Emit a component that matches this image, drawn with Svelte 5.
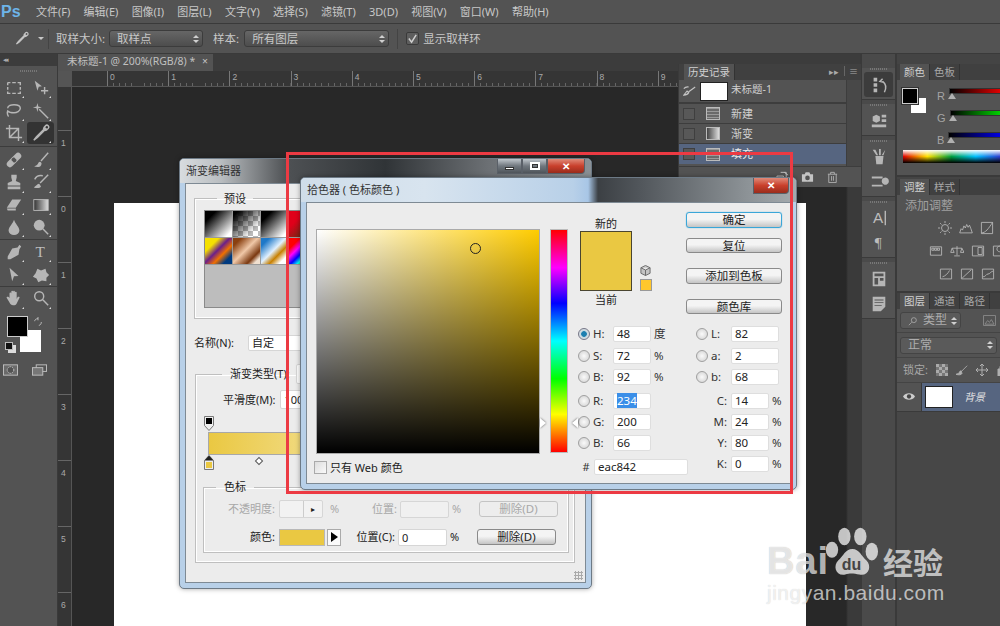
<script>
  const menus = ["文件(F)", "编辑(E)", "图像(I)", "图层(L)", "文字(Y)", "选择(S)", "滤镜(T)", "3D(D)", "视图(V)", "窗口(W)", "帮助(H)"];

  const mag = { s: "M8 8m-5 0a5 5 0 1 0 10 0a5 5 0 1 0-10 0M12 12l6 6" };
  const toolGroups = [
    [
      { s: "M3 4h3M8 4h4M14 4h3v3M17 9v3M17 14v2h-3M12 16H8M6 16H3v-2M3 12V9M3 7V4" },
      { f: "M3 2l8 6-3.5.5L6 13z", s: "M14 9v8M10 13h8" },
      { s: "M3 7c0-3 4-4 7-4s7 1 7 4-4 5-7 5-6-1-7-2c-1 2 0 5 1 6" },
      { f: "M6 1l1 4 4 1-4 1-1 4-1-4-4-1 4-1z", s: "M8 8l10 10" },
      { s: "M5 1v14h14M1 5h14v14M5 15L15 5" },
      { s: "M13 3l4 4M15 2a2 2 0 0 1 3 3l-3 2-2-2zM13 6l-8 8-3 4 4-3 8-8", on: true },
    ],
    [
      { f: "M3 12L12 3a3 3 0 0 1 5 5l-9 9a3 3 0 0 1-5-5zM8 8l-1 2 3 3 2-1 1-2-3-3z" },
      { f: "M9 12c-2 0-2 2-3 3s-3 2-4 2c3 1 7 1 8-1s1-3-1-4z", s: "M18 2L10 11" },
      { f: "M7 2h6v3l-1 4 5 2v3H3v-3l5-2-1-4zM3 15h14v3H3z" },
      { f: "M8 12c-2 0-3 2-6 4 3 1 7 1 8-1z", s: "M18 2L9 11M3 7a8 7 0 0 1 9-4" },
      { f: "M8 4h10l-6 9H2zM2 14h10v2H3z" },
      { grad: true },
      { f: "M10 2c1 4 6 8 6 12a6 5 0 0 1-12 0c0-4 5-8 6-12z" },
      { f: "M8 2a6 6 0 1 1 0 12a6 6 0 0 1 0-12z", s: "M12 12l6 6" },
    ],
    [
      { f: "M16 2l2 2-2 3-1 6-9 5-3 0 0-3 5-9 6-1z" },
      { t: "T" },
      { f: "M5 2l10 9-5 .5L8 17z" },
      { f: "M6 3l4 2 5-2 1 4 3 3-3 3v4l-5-1-4 2-2-4-4-2 3-4z" },
    ],
    [
      { f: "M5 10V5a1 1 0 0 1 2 0v3V3a1 1 0 0 1 2 0v5V3a1 1 0 0 1 2 0v5V4a1 1 0 0 1 2 0v7l1-2c1-1 3 0 2 1l-3 6c-1 2-2 2-3 2H9c-2 0-3-1-4-3L2 10c-1-1 1-2 2-1z" },
      mag,
    ],
  ];

  const stripGroups = [
    [{ f: "M4 2h4v4H4zM4 8h4v4H4zM4 14h4v4H4z", s: "M16 18c2-4 2-9-2-12M14 3l-3 3 4 1", on: true }],
    [{ f: "M3 5l4-2 4 2v5l-4 2-4-2zM13 3h5v3h-5zM13 8h5v3h-5zM2 14h16v3H2z" }],
    [
      { f: "M6 9h9l-1 9H7zM3 2l4 6h2L6 2zM10 1v7h2V1zM17 2l-4 6h2z" },
      { f: "M13 9a4 4 0 1 1 0 .1zM2 4h12v2H2zM2 13h12v2H2z" },
    ],
    [{ t: "A", bar: true }, { t: "¶" }],
    [
      { f: "M3 2h14v16H3zM5 4v3h10V4zM5 9v7h4V9zM11 9v3h4V9z" },
      { f: "M3 2h14v11l-5 5H3zM5 5v1h10V5zM5 8v1h10V8zM5 11v1h8v-1z" },
    ],
  ];

  const rulerX = [0, 1, 2, 3, 4, 5, 6, 7, 8, 9];
  const rulerY = ["", "1", "0", "1", "2", "3", "4", "5", "6"];

  const presets = ["bw", "tr", "bw", "rg", "vo", "cu", "bl", "rb"];

  const hsb = [
    { k: "H:", v: "48", u: "度", on: true },
    { k: "S:", v: "72", u: "%" },
    { k: "B:", v: "92", u: "%" },
  ];
  const rgb = [
    { k: "R:", v: "234", sel: true },
    { k: "G:", v: "200" },
    { k: "B:", v: "66" },
  ];
  const lab = [
    { k: "L:", v: "82" },
    { k: "a:", v: "2" },
    { k: "b:", v: "68" },
  ];
  const cmyk = [
    { k: "C:", v: "14" },
    { k: "M:", v: "24" },
    { k: "Y:", v: "80" },
    { k: "K:", v: "0" },
  ];

  const historyRows = [
    { name: "新建", kind: "doc" },
    { name: "渐变", kind: "grad" },
    { name: "填充", kind: "doc", on: true },
  ];

  const adjust = [
    ["M10 5a5 5 0 1 1 0 10a5 5 0 0 1 0-10zM10 0v3M10 17v3M0 10h3M17 10h3M3 3l2 2M15 15l2 2M3 17l2-2M15 5l2-2", "M1 17l2-6 2 2 2-6 2 3 2-5 2 4 2-3 2 5 2 6z", "M2 2h16v16H2zM2 17c6 0 10-6 16-15"],
    ["M2 4h16v12H2zM4 6v3h3V6zM8 6v3h3V6zM12 6v3h3V6z", "M10 3v13M3 6h14M3 6l-2 6h5zM17 6l-2 6h5zM6 17h8", "M2 3h16v14H2zM10 5v10h6V5z", "M2 3h16v14H2zM7 7a4 4 0 1 1 0 .1"],
    ["M2 3h16v14H2zM5 14c4-1 8-5 10-9", "M2 3h16v14H2zM3 16L16 4", "M2 3h16v14H2zM3 14c4 0 4-4 7-4s3-3 7-4"],
  ];
</script>

{#snippet icon(ic)}
  <svg class="ico" viewBox="0 0 20 20" aria-hidden="true">
    {#if ic.grad}
      <defs>
        <linearGradient id="toolgrad"><stop offset="0" stop-color="#333" /><stop offset="1" stop-color="#ddd" /></linearGradient>
      </defs>
      <rect x="2" y="4" width="16" height="12" fill="url(#toolgrad)" stroke="#bbb" />
    {/if}
    {#if ic.t}
      <text x="9" y="15" text-anchor="middle" class="ico-t" class:sans={ic.bar}>{ic.t}</text>
      {#if ic.bar}<path class="ln" d="M17 2v16" />{/if}
    {/if}
    {#if ic.f}<path class="fl" d={ic.f} fill-rule="evenodd" />{/if}
    {#if ic.s}<path class="ln" d={ic.s} />{/if}
  </svg>
{/snippet}

{#snippet valueRow(r, unit, wide, radio)}
  <div class="vrow" class:wide>
    {#if radio}<span class="radio" class:on={r.on}></span>{:else}<span></span>{/if}
    <span class="vkey" class:right={!radio}>{r.k}</span>
    <span class="vinput"><span class:sel={r.sel}>{r.v}</span></span>
    <span class="vunit">{unit ?? r.u ?? ""}</span>
  </div>
{/snippet}

<div class="ps">
  <header class="menubar">
    <span class="logo">Ps</span>
    <nav class="menus">
      {#each menus as m}<span>{m}</span>{/each}
    </nav>
  </header>

  <div class="options">
    <svg class="opt-dropper" viewBox="0 0 20 20"><path d="M13 3l4 4M15 2a2 2 0 0 1 3 3l-3 2-2-2zM13 6l-8 8-3 4 4-3 8-8" fill="none" stroke="#c4c4c4" stroke-width="1.8" /></svg>
    <span class="caret"></span>
    <span class="opt-sep"></span>
    <span class="opt-label">取样大小:</span>
    <span class="select w1">取样点<i class="updown"></i></span>
    <span class="opt-label l2">样本:</span>
    <span class="select w2">所有图层<i class="updown"></i></span>
    <span class="opt-sep s2"></span>
    <span class="opt-check">
      <svg viewBox="0 0 12 12"><path d="M2 6l3 4 5-8" fill="none" stroke="#d0d0d0" stroke-width="1.6" /></svg>
    </span>
    <span class="opt-label">显示取样环</span>
  </div>

  <div class="main">
    <aside class="toolbar">
      <div class="collapse">◂◂</div>
      <div class="grip"></div>
      {#each toolGroups as group, i}
        {#if i > 0}<div class="tool-div d{i}"></div>{/if}
        <div class="tool-grid">
          {#each group as t}
            <div class="tool" class:on={t.on}>{@render icon(t)}</div>
          {/each}
        </div>
      {/each}
      <div class="colors">
        <span class="bg-sw"></span>
        <span class="fg-sw"></span>
        <span class="def-sw"></span>
        <svg class="swap" viewBox="0 0 12 12"><path d="M2 5c0-2 2-3 4-3M7 10c2 0 3-2 3-4M6 0v4M2 8" fill="none" stroke="#c8c8c8" /></svg>
      </div>
      <div class="tool-modes">
        <svg viewBox="0 0 16 12"><rect x=".5" y=".5" width="15" height="11" fill="#6a6a6a" stroke="#c0c0c0" /><circle cx="8" cy="6" r="3.5" fill="#535353" stroke="#ccc" stroke-dasharray="1.5 1" /></svg>
        <svg viewBox="0 0 16 12"><rect x="4.5" y=".5" width="11" height="7" fill="none" stroke="#c0c0c0" /><rect x=".5" y="3.5" width="11" height="8" fill="#777" stroke="#c0c0c0" /></svg>
      </div>
    </aside>

    <section class="docarea">
      <div class="tabbar">
        <div class="tab">未标题-1 @ 200%(RGB/8) * <span class="tab-x">×</span></div>
      </div>
      <div class="ruler-top">
        <div class="corner"></div>
        <div class="rx-offset"></div>
        {#each rulerX as n}<div class="rx">{n}</div>{/each}
      </div>
      <div class="canvas-row">
        <div class="ruler-left">
          {#each rulerY as n}<div class="ry">{n}</div>{/each}
        </div>
        <div class="canvas"><div class="paper"></div></div>
      </div>
    </section>

    <aside class="strip">
      {#each stripGroups as group}
        <div class="strip-group">
          <div class="grip"></div>
          {#each group as ic}
            <div class="strip-btn" class:on={ic.on}>{@render icon(ic)}</div>
          {/each}
        </div>
      {/each}
    </aside>

    <aside class="dock">
      <div class="panel color-panel">
        <div class="ptabs"><span class="ptab on">颜色</span><span class="ptab">色板</span></div>
        <div class="color-body">
          <div class="mini-sw"><span class="mini-bg"></span><span class="mini-fg"></span></div>
          <div class="sliders">
            <div class="slider"><span>R</span><i class="track r"></i></div>
            <div class="slider"><span>G</span><i class="track g"></i></div>
            <div class="slider"><span>B</span><i class="track b"></i></div>
          </div>
        </div>
        <div class="spectrum"></div>
      </div>
      <div class="panel adj-panel">
        <div class="ptabs"><span class="ptab on">调整</span><span class="ptab">样式</span></div>
        <div class="adj-title">添加调整</div>
        {#each adjust as row, i}
          <div class="adj-row" class:r1={i === 0} class:r2={i === 1} class:r3={i === 2}>
            {#each row as d}
              <svg viewBox="0 0 20 20"><path class="ln thin" d={d} /></svg>
            {/each}
          </div>
        {/each}
      </div>
      <div class="panel layer-panel">
        <div class="ptabs"><span class="ptab on">图层</span><span class="ptab">通道</span><span class="ptab">路径</span></div>
        <div class="lfilter">
          <span class="lselect s1"><svg viewBox="0 0 12 12"><path d="M7 5m-3 0a3 3 0 1 0 6 0a3 3 0 1 0-6 0M4.500 7.500L1 11" fill="none" stroke="#a8a8a8" /></svg>类型<i class="updown"></i></span>
          <svg class="limg" viewBox="0 0 14 12"><path d="M.5.5h13v11H.5zM2 10l3-4 2 2 2-3 3 5z" fill="none" stroke="#8a8a8a" /></svg>
        </div>
        <div class="lblend"><span class="lselect s2">正常<i class="updown"></i></span></div>
        <div class="llock">
          <span>锁定:</span>
          <svg viewBox="0 0 12 12"><path d="M0 0h12v12H0z" fill="#777" /><path d="M0 0h3v3H0zM6 0h3v3H6zM3 3h3v3H3zM9 3h3v3H9zM0 6h3v3H0zM6 6h3v3H6zM3 9h3v3H3zM9 9h3v3H9z" fill="#aaa" /></svg>
          <svg viewBox="0 0 14 12"><path d="M13 1L6 8M6 7c-2 0-2 2-3 3l-3 1c3 1 6 1 7-1z" fill="#b0b0b0" stroke="#b0b0b0" /></svg>
          <svg viewBox="0 0 12 12"><path d="M6 0v12M0 6h12M4 2l2-2 2 2M4 10l2 2 2-2M2 4L0 6l2 2M10 4l2 2-2 2" fill="none" stroke="#b0b0b0" /></svg>
          <svg viewBox="0 0 10 12"><path d="M3 5V3a2 2 0 0 1 4 0v2M1 5h8v7H1z" fill="#b0b0b0" stroke="#b0b0b0" /></svg>
        </div>
        <div class="lrow">
          <svg class="eye" viewBox="0 0 14 10"><path d="M0 5c3-5 11-5 14 0-3 5-11 5-14 0z" fill="#ccc" /><circle cx="7" cy="5" r="2.500" fill="#444" /></svg>
          <div class="lrow-main">
            <span class="lthumb"></span>
            <em>背景</em>
          </div>
        </div>
      </div>
    </aside>
  </div>

  <!-- floating history panel -->
  <div class="history">
    <div class="htop">
      <span class="ptab on">历史记录</span>
      <span class="hmenu">▸▸ <i></i> ≡</span>
    </div>
    <div class="hbody">
      <div class="hlist">
        <div class="hsnap">
          <svg viewBox="0 0 16 12"><path d="M15 1L7 7M1 11c3 0 5-1 6-3L5 6zM1 3a6 5 0 0 1 6-2" fill="none" stroke="#c4c4c4" stroke-width="1.400" /></svg>
          <span class="hthumb"></span>
          <span class="htxt">未标题-1</span>
        </div>
        {#each historyRows as r}
          <div class="hrow" class:on={r.on}>
            <span class="hbox"></span>
            <span class="hicon" class:grad={r.kind === "grad"}></span>
            <span>{r.name}</span>
          </div>
        {/each}
      </div>
      <div class="hscroll"></div>
    </div>
    <div class="hfoot">
      <svg viewBox="0 0 14 12"><path d="M1 5h7v6H1zM5 1h6v7M9 1l4 3" fill="none" stroke="#c4c4c4" /></svg>
      <svg viewBox="0 0 14 12"><path d="M1 3h3l1-2h4l1 2h3v8H1z" fill="#c4c4c4" /><circle cx="7" cy="7" r="2.500" fill="#535353" /></svg>
      <svg viewBox="0 0 14 12"><path d="M2 3h10M5 3V1h4v2M3 3v9h8V3M6 5v5M8 5v5" fill="none" stroke="#b0b0b0" /></svg>
    </div>
  </div>

  <!-- gradient editor dialog -->
  <div class="win ge">
    <div class="title ge-title">
      <span>渐变编辑器</span>
      <div class="winbtns">
        <span class="wb"><i class="w-min"></i></span>
        <span class="wb"><i class="w-max"></i></span>
        <span class="wb close">✕</span>
      </div>
    </div>
    <div class="ge-body">
      <fieldset class="presets">
        <legend>预设</legend>
        <div class="preset-box">
          <div class="preset-grid">
            {#each presets as p}<span class="pre {p}"></span>{/each}
          </div>
        </div>
      </fieldset>
      <div class="name-row">
        <span>名称(N):</span>
        <span class="input name-in">自定</span>
      </div>
      <fieldset class="gtype">
        <legend>渐变类型(T): <span class="input gt-in">实底</span></legend>
        <div class="smooth">
          <span>平滑度(M):</span>
          <span class="input sm-in">100</span>
        </div>
        <div class="bar-wrap">
          <svg class="stop top" viewBox="0 0 10 15"><path d="M.5.5h9v9L5 14.500.5 9.500z" fill="#eee" stroke="#777" /><rect x="2" y="2" width="6" height="6" /></svg>
          <div class="gbar"></div>
          <svg class="stop bot" viewBox="0 0 10 15"><path d="M5 .5l4.500 5v9h-9v-9z" fill="#eee" stroke="#777" /><path d="M5 .5l4.500 5h-9z" fill="#222" /><rect x="2" y="7" width="6" height="6" fill="#eac842" /></svg>
          <span class="mid"></span>
        </div>
        <fieldset class="stops">
          <legend>色标</legend>
          <div class="srow dis">
            <span class="s-a">不透明度:</span>
            <span class="input o-in"><i class="o-arrow">▸</i></span>
            <span class="s-u">%</span>
            <span class="s-b">位置:</span>
            <span class="input p-in"></span>
            <span class="s-u">%</span>
            <span class="btn del">删除(D)</span>
          </div>
          <div class="srow">
            <span class="s-a">颜色:</span>
            <span class="sw-color"></span>
            <span class="sw-arrow"><i></i></span>
            <span class="s-b">位置(C):</span>
            <span class="input p-in">0</span>
            <span class="s-u">%</span>
            <span class="btn del">删除(D)</span>
          </div>
        </fieldset>
      </fieldset>
      <div class="resize"></div>
    </div>
  </div>

  <!-- color picker dialog -->
  <div class="win cp">
    <div class="title cp-title">
      <span>拾色器 ( 色标颜色 )</span>
      <div class="winbtns"><span class="wb close">✕</span></div>
    </div>
    <div class="cp-body">
      <div class="cp-left">
        <div class="field"><span class="marker"></span></div>
        <label class="webonly"><span class="cb"></span>只有 Web 颜色</label>
      </div>
      <div class="hue">
        <span class="tri l"></span>
        <span class="tri r"></span>
      </div>
      <div class="cp-right">
        <div class="cp-top">
          <div class="preview">
            <span>新的</span>
            <div class="prev-row">
              <div class="prev-main"></div>
              <div class="prev-side">
                <svg viewBox="0 0 12 12"><path d="M6 .5l5 2.500v6l-5 2.500-5-2.500v-6zM1 3l5 2.500L11 3M6 5.500V11.500" fill="#c4c4c4" stroke="#666" /></svg>
                <span class="web-sw"></span>
              </div>
            </div>
            <span>当前</span>
          </div>
          <div class="cp-btns">
            <span class="btn def">确定</span>
            <span class="btn b2">复位</span>
            <span class="btn b3">添加到色板</span>
            <span class="btn b3">颜色库</span>
          </div>
        </div>
        <div class="vals">
          <div class="vcol">
            <div class="vgroup">{#each hsb as r}{@render valueRow(r, null, false, true)}{/each}</div>
            <div class="vgroup gap">{#each rgb as r}{@render valueRow(r, "", false, true)}{/each}</div>
            <div class="hexrow"><span>#</span><span class="vinput hex">eac842</span></div>
          </div>
          <div class="vcol">
            <div class="vgroup">{#each lab as r}{@render valueRow(r, "", true, true)}{/each}</div>
            <div class="vgroup gap">{#each cmyk as r}{@render valueRow(r, "%", false, false)}{/each}</div>
          </div>
        </div>
      </div>
    </div>
  </div>

  <div class="redbox"></div>

  <div class="watermark">
    <span class="wm-bai">Bai</span>
    <svg class="paw" viewBox="0 0 70 70">
      <ellipse cx="9" cy="28" rx="7" ry="9" />
      <ellipse cx="23" cy="13" rx="7" ry="10" />
      <ellipse cx="41" cy="13" rx="7" ry="10" />
      <ellipse cx="54" cy="30" rx="7" ry="10" />
      <path d="M32 27c8 0 10 8 16 13 6 6 3 18-8 16-6-1-10-2-16 0-11 2-14-10-8-16 6-5 8-13 16-13z" />
      <text x="31" y="51" text-anchor="middle">du</text>
    </svg>
    <span class="wm-jy">经验</span>
    <span class="wm-url">jingyan.baidu.com</span>
  </div>
</div>

<style>
  :global(body) {
    margin: 0;
    background: #535353;
  }

  .ps {
    position: relative;
    width: 1000px;
    height: 626px;
    overflow: hidden;
    display: flex;
    flex-direction: column;
    background: #535353;
    color: #c8c8c8;
    font-family: "Noto Sans", "Noto Sans CJK SC", sans-serif;
    font-size: 11px;
    line-height: 1.2;
  }

  /* icons */
  .ico {
    width: 18px;
    height: 18px;
    display: block;
    overflow: visible;
  }
  .fl {
    fill: #b6b6b6;
  }
  .ln {
    fill: none;
    stroke: #b6b6b6;
    stroke-width: 1.6;
  }
  .ln.thin {
    stroke-width: 1.2;
    stroke: #bbb;
  }
  .ico-t {
    font-family: "Liberation Serif", serif;
    font-size: 17px;
    fill: #bdbdbd;
  }
  .ico-t.sans {
    font-family: "Liberation Sans", sans-serif;
    font-size: 17px;
  }

  /* top bars */
  .menubar {
    height: 24px;
    display: flex;
    align-items: center;
    box-sizing: border-box;
    border-bottom: 1px solid #3a3a3a;
  }
  .logo {
    width: 36px;
    padding-left: 1px;
    box-sizing: border-box;
    color: #6db4e8;
    font: bold 16px "Liberation Sans", sans-serif;
  }
  .menus {
    display: flex;
    gap: 13.300px;
    white-space: nowrap;
  }

  .options {
    height: 30px;
    box-sizing: border-box;
    padding: 0 0 0 15px;
    display: flex;
    align-items: center;
    border-bottom: 1px solid #3a3a3a;
  }
  .opt-dropper {
    width: 14px;
    height: 15px;
  }
  .caret {
    margin-left: 9px;
    border: 3px solid transparent;
    border-top: 3px solid #c8c8c8;
    margin-top: 3px;
  }
  .opt-sep {
    width: 1px;
    height: 20px;
    background: #444;
    margin: 0 7px 0 4px;
  }
  .opt-sep.s2 {
    margin: 0 8px;
  }
  .opt-label {
    white-space: nowrap;
    font-size: 11.500px;
  }
  .opt-label.l2 {
    margin: 0 5px 0 10px;
  }
  .select {
    position: relative;
    margin-left: 4px;
    height: 17px;
    box-sizing: border-box;
    padding: 1px 7px;
    border: 1px solid #3c3c3c;
    border-radius: 3px;
    background: linear-gradient(#666, #4d4d4d);
    font-size: 11.500px;
  }
  .select.w1 {
    width: 94px;
  }
  .select.w2 {
    width: 145px;
    margin-left: 0;
  }
  .updown {
    position: absolute;
    right: 6px;
    top: 50%;
    width: 0;
    height: 0;
    margin-top: -4px;
  }
  .updown::before,
  .updown::after {
    content: "";
    position: absolute;
    left: -3px;
    border: 3px solid transparent;
  }
  .updown::before {
    top: -3px;
    border-bottom-color: #d0d0d0;
  }
  .updown::after {
    top: 5px;
    border-top-color: #d0d0d0;
  }
  .opt-check {
    width: 11px;
    height: 11px;
    border: 1px solid #3a3a3a;
    border-radius: 2px;
    background: #5e5e5e;
    margin-right: 4px;
  }
  .opt-check svg {
    display: block;
  }

  .main {
    flex: 1;
    min-height: 0;
    display: grid;
    grid-template-columns: 58px 802px 37px 103px;
  }

  /* left toolbar */
  .toolbar {
    background: #535353;
    border-right: 1px solid #3a3a3a;
    box-sizing: border-box;
  }
  .collapse {
    height: 12px;
    background: #3c3c3c;
    font-size: 7px;
    line-height: 12px;
    padding-left: 3px;
    color: #aaa;
    letter-spacing: -2px;
  }
  .grip {
    height: 2px;
    margin: 4px auto 5px;
    width: 18px;
    background: repeating-linear-gradient(90deg, #777 0 1px, transparent 1px 2px);
  }
  .tool-grid {
    display: grid;
    grid-template-columns: 26px 27px;
    grid-auto-rows: 22.400px;
    margin: 0 1px;
  }
  .tool {
    position: relative;
    display: flex;
    align-items: center;
    justify-content: center;
  }
  .tool::after {
    content: "";
    position: absolute;
    right: 3px;
    bottom: 1px;
    border: 1.500px solid transparent;
    border-right-color: #ddd;
    border-bottom-color: #ddd;
  }
  .tool.on {
    background: #333;
    border-radius: 3px;
  }
  .tool-div {
    height: 1px;
    margin: 1.800px 0;
    background: #3c3c3c;
  }
  .tool-div.d2 {
    margin: 0.800px 0;
  }
  .tool-div.d3 {
    margin: 0.300px 0;
  }
  .colors {
    position: relative;
    height: 38px;
    margin-top: 6px;
  }
  .fg-sw {
    position: absolute;
    left: 7px;
    top: 0;
    width: 19px;
    height: 19px;
    background: #000;
    border: 1px solid #ccc;
  }
  .bg-sw {
    position: absolute;
    left: 20px;
    top: 14px;
    width: 21px;
    height: 22px;
    background: #fff;
  }
  .def-sw {
    position: absolute;
    left: 5px;
    top: 26px;
    width: 6px;
    height: 6px;
    background: #111;
    border: 1px solid #bbb;
    box-shadow: 3px 3px 0 #ddd;
  }
  .swap {
    position: absolute;
    left: 33px;
    top: 1px;
    width: 10px;
    height: 10px;
  }
  .tool-modes {
    margin-top: 10px;
    padding-left: 3px;
    display: flex;
    gap: 14px;
  }
  .tool-modes svg {
    width: 15px;
    height: 12px;
  }

  /* document area */
  .docarea {
    display: flex;
    flex-direction: column;
    background: #282828;
    min-width: 0;
    overflow: hidden;
  }
  .tabbar {
    height: 17px;
    background: #3c3c3c;
    flex: none;
  }
  .tab {
    width: 155px;
    height: 17px;
    box-sizing: border-box;
    padding: 1px 0 0 9px;
    background: #535353;
    white-space: nowrap;
    font-size: 10.500px;
    color: #c0c0c0;
  }
  .tab-x {
    margin-left: 4px;
  }
  .ruler-top {
    flex: none;
    height: 15px;
    display: flex;
    background: #353535;
    border-bottom: 1px solid #555;
    box-sizing: content-box;
  }
  .corner {
    width: 14px;
    background: #555;
    flex: none;
  }
  .rx-offset {
    width: 35px;
    flex: none;
  }
  .rx,
  .ry {
    flex: none;
    color: #aaa;
    font-size: 8.500px;
    font-family: "Liberation Sans", sans-serif;
    box-sizing: border-box;
  }
  .rx {
    width: 61.200px;
    padding: 1px 0 0 2px;
    border-left: 1px solid #777;
    background: repeating-linear-gradient(90deg, transparent 0 5.100px, #666 5.100px 6.100px) bottom / 100% 3px no-repeat;
  }
  .canvas-row {
    flex: 1;
    min-height: 0;
    display: flex;
  }
  .ruler-left {
    flex: none;
    width: 13px;
    background: #353535;
    border-right: 1px solid #555;
    overflow: hidden;
  }
  .ry {
    height: 66px;
    padding: 0 0 0 3px;
    border-top: 1px solid #666;
    line-height: 24px;
  }
  .ry:first-child {
    height: 43px;
    border: 0;
  }
  .canvas {
    flex: 1;
    padding: 116px 0 0 42px;
    background: linear-gradient(90deg, transparent 774px, #3a3a3a 776px);
  }
  .paper {
    width: 692px;
    height: 430px;
    background: #fff;
  }

  /* icon strip */
  .strip {
    background: #4a4a4a;
    border-left: 2px solid #3a3a3a;
    border-right: 2px solid #3a3a3a;
    padding-top: 10px;
  }
  .strip-group {
    background: #535353;
    border-bottom: 1px solid #3a3a3a;
    padding: 0 2px 2px;
  }
  .strip-group .grip {
    margin: 4px auto 2px;
  }
  .strip-btn {
    height: 25px;
    display: flex;
    align-items: center;
    justify-content: center;
  }
  .strip-btn.on {
    background: #3c3c3c;
    border-radius: 3px;
  }

  /* right panels */
  .dock {
    background: #444;
    display: flex;
    flex-direction: column;
    min-width: 0;
  }
  .panel {
    background: #535353;
    border-bottom: 2px solid #3a3a3a;
    box-sizing: border-box;
  }
  .ptabs {
    height: 16px;
    background: #404040;
    display: flex;
    padding-left: 3px;
  }
  .ptab {
    padding: 2px 4px 0;
    height: 16px;
    box-sizing: border-box;
    border-right: 1px solid #333;
    color: #a8a8a8;
    white-space: nowrap;
    font-size: 10.500px;
  }
  .ptab.on {
    background: #535353;
    color: #d0d0d0;
  }
  .color-panel {
    margin-top: 10px;
    height: 113px;
  }
  .color-body {
    display: flex;
    padding: 8px 0 0 5px;
  }
  .mini-sw {
    position: relative;
    width: 26px;
    height: 26px;
    flex: none;
  }
  .mini-fg,
  .mini-bg {
    position: absolute;
    display: block;
  }
  .mini-fg {
    left: 0;
    top: 0;
    width: 14px;
    height: 14px;
    background: #000;
    border: 1px solid #ccc;
    box-shadow: 0 0 0 1px #333;
  }
  .mini-bg {
    left: 9px;
    top: 10px;
    width: 15px;
    height: 15px;
    background: #fff;
  }
  .sliders {
    margin-left: 9px;
    flex: 1;
    min-width: 0;
  }
  .slider {
    position: relative;
    height: 22px;
    display: flex;
    align-items: flex-start;
    gap: 4px;
    color: #a4a4a4;
    font-family: "Liberation Sans", sans-serif;
    font-size: 11px;
  }
  .slider span {
    margin-top: 2px;
  }
  .track {
    position: relative;
    flex: 1;
    height: 4px;
    border: 1px solid #333;
    border-right: 0;
  }
  .track::after {
    content: "";
    position: absolute;
    left: -2px;
    top: 4px;
    border: 4px solid transparent;
    border-bottom: 6px solid #b0b0b0;
    border-top: 0;
  }
  .track.r {
    background: linear-gradient(90deg, #000, #e00000);
  }
  .track.g {
    background: linear-gradient(90deg, #000, #00d000);
  }
  .track.b {
    background: linear-gradient(90deg, #000, #0000e0);
  }
  .spectrum {
    height: 13px;
    margin: -4px 0 0 6px;
    background:
      linear-gradient(#fff0 50%, #000 100%),
      linear-gradient(#fff, #fff0 50%),
      linear-gradient(90deg, #e00000, #ffe000 25%, #00a040 50%, #00c0ff 75%, #3040d0);
  }
  .adj-panel {
    margin-top: 2px;
    height: 114px;
  }
  .adj-title {
    padding: 4px 0 0 8px;
    color: #a0a0a0;
    font-size: 12px;
  }
  .adj-row {
    display: flex;
    gap: 7px;
    height: 23px;
    align-items: center;
    white-space: nowrap;
    overflow: hidden;
  }
  .adj-row svg {
    width: 14px;
    height: 14px;
    flex: none;
  }
  .adj-row.r1 {
    margin-top: 3px;
    padding-left: 41px;
  }
  .adj-row.r2 {
    padding-left: 32px;
  }
  .adj-row.r3 {
    padding-left: 42px;
  }
  .layer-panel {
    flex: 1;
    margin-top: 0;
    background: #474747;
    border: 0;
  }
  .lfilter,
  .lblend,
  .llock {
    background: #535353;
    border-bottom: 1px solid #444;
    display: flex;
    align-items: center;
    box-sizing: border-box;
  }
  .lfilter {
    height: 24px;
    padding-left: 3px;
  }
  .lblend {
    height: 25px;
    padding-left: 3px;
  }
  .llock {
    height: 25px;
    padding-left: 6px;
    gap: 8px;
    white-space: nowrap;
    color: #a8a8a8;
    overflow: hidden;
  }
  .llock svg {
    width: 12px;
    height: 12px;
    flex: none;
  }
  .lselect {
    position: relative;
    display: flex;
    align-items: center;
    gap: 5px;
    height: 17px;
    box-sizing: border-box;
    border: 1px solid #444;
    border-radius: 3px;
    padding-left: 7px;
    background: #5a5a5a;
    color: #adadad;
    font-size: 12px;
  }
  .lselect svg {
    width: 10px;
    height: 10px;
  }
  .lselect.s1 {
    width: 61px;
  }
  .lselect.s2 {
    width: 97px;
  }
  .limg {
    width: 13px;
    height: 11px;
    margin-left: 22px;
  }
  .lrow {
    height: 28px;
    display: flex;
    border-bottom: 1px solid #3a3a3a;
    background: #535353;
  }
  .eye {
    width: 12px;
    height: 9px;
    margin: 9px 6px 0 6px;
    flex: none;
  }
  .lrow-main {
    flex: 1;
    display: flex;
    align-items: center;
    gap: 11px;
    padding-left: 3px;
    background: #566580;
    border-left: 1px solid #3a3a3a;
  }
  .lthumb {
    width: 26px;
    height: 20px;
    background: #fff;
    border: 1px solid #222;
  }
  .lrow-main em {
    color: #e0e0e0;
    font-size: 10.500px;
  }

  /* history */
  .history {
    position: absolute;
    left: 678px;
    top: 64px;
    width: 182px;
    height: 123px;
    background: #535353;
    border-left: 1px solid #3a3a3a;
  }
  .htop {
    height: 16px;
    background: #404040;
    display: flex;
    justify-content: space-between;
    padding-left: 5px;
  }
  .hmenu {
    padding-right: 3px;
    font-size: 9px;
    color: #aaa;
    line-height: 16px;
  }
  .hmenu i {
    display: inline-block;
    width: 1px;
    height: 10px;
    background: #666;
    margin: 0 2px;
    vertical-align: -1px;
  }
  .hbody {
    display: flex;
    height: 86px;
  }
  .hlist {
    flex: 1;
    min-width: 0;
  }
  .hscroll {
    width: 14px;
    background: #484848;
    border-left: 1px solid #3d3d3d;
  }
  .hsnap {
    height: 24px;
    box-sizing: border-box;
    padding: 2px 0 0 4px;
    display: flex;
    gap: 4px;
    border-bottom: 2px solid #3d3d3d;
  }
  .hsnap svg {
    width: 13px;
    height: 10px;
    margin-top: 4px;
  }
  .hthumb {
    width: 26px;
    height: 17px;
    background: #fff;
    border: 1px solid #222;
  }
  .htxt {
    margin-left: -1px;
    padding-top: 1px;
    color: #d0d0d0;
    font-size: 10.500px;
  }
  .hrow {
    height: 20px;
    box-sizing: border-box;
    display: flex;
    align-items: center;
    padding-left: 4px;
    border-bottom: 1px solid #3d3d3d;
    color: #d0d0d0;
  }
  .hrow.on {
    background: #566580;
    border: 0;
    color: #eee;
  }
  .hbox {
    width: 10px;
    height: 10px;
    border: 1px solid #3f3f3f;
    background: #585858;
    margin-right: 11px;
  }
  .hicon {
    width: 12px;
    height: 11px;
    border: 1px solid #bbb;
    background: repeating-linear-gradient(#999 0 1px, #6a6a6a 1px 3px);
    margin-right: 11px;
  }
  .hicon.grad {
    background: linear-gradient(90deg, #444, #ddd);
  }
  .hfoot {
    height: 20px;
    display: flex;
    justify-content: flex-end;
    align-items: center;
    gap: 12px;
    padding-right: 22px;
    border-top: 1px solid #3d3d3d;
  }
  .hfoot svg {
    width: 13px;
    height: 12px;
  }

  /* dialogs */
  .win {
    position: absolute;
    box-sizing: border-box;
    display: flex;
    flex-direction: column;
    background: #b8d0e8;
    border: 1px solid #6d7a86;
    border-radius: 5px;
    color: #222;
    font-size: 11px;
    box-shadow: 0 0 5px rgba(0, 0, 0, 0.35);
    padding: 0 5px 5px;
  }
  .title {
    height: 24px;
    flex: none;
    display: flex;
    justify-content: space-between;
    margin: 0 -5px;
    padding-left: 6px;
    border-radius: 4px 4px 0 0;
    font-size: 11px;
    color: #333;
    line-height: 24px;
  }
  .winbtns {
    display: flex;
    height: 16px;
    margin-right: 6px;
  }
  .wb {
    position: relative;
    width: 25px;
    height: 15px;
    box-sizing: border-box;
    border: 1px solid #5a6068;
    border-top: 0;
    background: linear-gradient(#c0c6cc, #70777e 50%, #50565c);
  }
  .wb i {
    position: absolute;
    display: block;
    box-sizing: border-box;
  }
  .w-min {
    left: 7px;
    top: 8px;
    width: 9px;
    height: 3px;
    background: #fff;
    border: 1px solid #333;
  }
  .w-max {
    left: 7px;
    top: 3px;
    width: 10px;
    height: 8px;
    border: 2px solid #fff;
    outline: 1px solid #333;
    outline-offset: -3px;
  }
  .wb.close {
    width: 38px;
    border-radius: 0 0 4px 0;
    background: linear-gradient(#e08a78, #c9402c 50%, #9a2c1c);
    color: #fff;
    font-size: 10px;
    font-weight: bold;
    text-align: center;
    line-height: 14px;
  }

  .ge {
    left: 179px;
    top: 158px;
    width: 413px;
    height: 431px;
  }
  .ge-title {
    background: linear-gradient(90deg, #d8dcdf, #b9bdc0 10%, #4e5154 26%, #303437 50%, #6c7074 75%, #8a9095);
  }
  .ge-body {
    position: relative;
    flex: 1;
    background: #ececec;
    border: 1px solid #7e8a94;
    padding-top: 8px;
    padding-left: 8px;
    box-sizing: border-box;
    min-height: 0;
  }
  fieldset {
    margin: 0;
    padding: 0;
    min-width: 0;
    border: 1px solid #bfbfbf;
    box-shadow: inset 0 0 0 1px #fff;
    box-sizing: border-box;
  }
  legend {
    padding: 0 7px;
    font-size: 11px;
    color: #222;
  }
  .presets {
    width: 380px;
    height: 127px;
    padding: 5px 0 0 9px;
  }
  .presets legend {
    margin-left: 13px;
  }
  .preset-box {
    width: 300px;
    height: 98px;
    background: #bdbdbd;
    border: 1px solid #8a8a8a;
    box-sizing: border-box;
  }
  .preset-grid {
    display: grid;
    grid-template-columns: repeat(4, 28px);
    grid-auto-rows: 27px;
  }
  .pre {
    box-shadow: inset -1px -1px 0 #9a9a9a;
  }
  .pre.bw {
    background: linear-gradient(135deg, #000 20%, #fff 85%);
  }
  .pre.tr {
    background:
      linear-gradient(135deg, #000 10%, #0000 75%),
      repeating-conic-gradient(#bbb 0 25%, #fff 0 50%) 0 0 / 10px 10px;
  }
  .pre.rg {
    background: linear-gradient(135deg, #e0001a 30%, #1a4a10);
  }
  .pre.vo {
    background: linear-gradient(135deg, #f5e000 25%, #6a1e8a 45%, #f07000 62%, #003a80 80%);
  }
  .pre.cu {
    background: linear-gradient(135deg, #8a4010 15%, #f0c8a8 45%, #7a3810 72%, #f0e0d0 85%);
  }
  .pre.bl {
    background: linear-gradient(135deg, #1e78c8 15%, #e0f0ff 45%, #c88000 62%, #fff 80%);
  }
  .pre.rb {
    background: linear-gradient(135deg, #f00 20%, #f0f 35%, #00f 50%, #0ff 62%, #0f0 75%, #ff0 90%);
  }

  .input {
    display: inline-block;
    box-sizing: border-box;
    background: #fff;
    border: 1px solid #d6d6d6;
    border-radius: 2px;
    padding: 0 3px;
    color: #222;
  }
  .name-row {
    display: flex;
    align-items: center;
    gap: 14px;
    margin-top: 16px;
    height: 16px;
  }
  .name-in {
    width: 280px;
    height: 16px;
    padding-left: 3px;
  }
  .gtype {
    position: relative;
    width: 380px;
    height: 199px;
    margin: 13px 0 0 1px;
    padding-left: 7px;
  }
  .gtype legend {
    margin-left: 19px;
    padding: 0 8px;
    display: flex;
    align-items: center;
    gap: 6px;
    line-height: 20px;
  }
  .gt-in {
    width: 100px;
    height: 20px;
  }
  .smooth {
    display: flex;
    align-items: center;
    gap: 4px;
    margin: 6px 0 0 20px;
    height: 19px;
  }
  .sm-in {
    width: 100px;
    height: 19px;
    line-height: 17px;
    padding-left: 4px;
  }
  .bar-wrap {
    position: relative;
    height: 61px;
    margin: 4px 0 0 5px;
    padding-top: 19px;
    box-sizing: border-box;
  }
  .gbar {
    width: 360px;
    height: 23px;
    box-sizing: border-box;
    border: 1px solid #a8a8a8;
    background: linear-gradient(90deg, #eac842, #fff 300px);
  }
  .stop {
    position: absolute;
    left: -4px;
    width: 10px;
    height: 15px;
  }
  .stop.top {
    top: 3px;
  }
  .stop.bot {
    top: 42px;
  }
  .mid {
    position: absolute;
    left: 48px;
    top: 45px;
    width: 4px;
    height: 4px;
    background: #fff;
    border: 1px solid #555;
    transform: rotate(45deg);
  }
  .stops {
    width: 366px;
    height: 76px;
    padding: 3px 0 0;
    margin-top: 3px;
  }
  .stops legend {
    margin-left: 12px;
  }
  .srow {
    display: flex;
    align-items: center;
    height: 18px;
    margin-bottom: 10px;
  }
  .srow.dis {
    color: #a8a8a8;
  }
  .s-a {
    width: 71px;
    text-align: right;
    margin-right: 4px;
  }
  .s-b {
    width: 50px;
    margin: 0 3px 0 0;
    text-align: right;
  }
  .s-u {
    width: 26px;
    padding-left: 3px;
    box-sizing: border-box;
  }
  .o-in {
    position: relative;
    width: 44px;
    height: 18px;
    background: #f2f2f2;
    margin-right: 4px;
  }
  .o-arrow {
    position: absolute;
    right: 0;
    top: 0;
    height: 16px;
    width: 18px;
    border-left: 1px solid #ccc;
    text-align: center;
    font-size: 8px;
    line-height: 16px;
    font-style: normal;
  }
  .srow.dis .s-u:nth-of-type(3) {
    margin-right: 4px;
  }
  .srow.dis .s-b {
    width: 40px;
  }
  .p-in {
    width: 49px;
    height: 17px;
    line-height: 15px;
  }
  .srow.dis .p-in {
    background: #f0f0f0;
  }
  .sw-color {
    width: 46px;
    height: 17px;
    background: #eac842;
    border: 1px solid #b8b8b8;
    box-sizing: border-box;
  }
  .sw-arrow {
    width: 14px;
    height: 17px;
    margin: 0 4px 0 2px;
    box-sizing: border-box;
    border: 1px solid #aaa;
    display: flex;
    align-items: center;
    justify-content: center;
    background: #fafafa;
  }
  .sw-arrow i {
    border: 5px solid transparent;
    border-left: 7px solid #000;
    border-right: 0;
  }
  .btn {
    display: block;
    box-sizing: border-box;
    height: 15.500px;
    text-align: center;
    line-height: 13.500px;
    border: 1px solid #8a8a8a;
    border-radius: 3px;
    background: linear-gradient(#f4f4f4 45%, #c4c4c4);
    color: #222;
    font-size: 11.500px;
  }
  .del {
    width: 79px;
    margin-left: 4px;
  }
  .srow.dis .del {
    color: #a8a8a8;
    border-color: #c4c4c4;
    background: #ededed;
  }
  .resize {
    position: absolute;
    right: 2px;
    bottom: 2px;
    width: 9px;
    height: 9px;
    background: radial-gradient(#aaa 1px, transparent 1.200px) 0 0 / 3px 3px;
  }

  .cp {
    left: 300px;
    top: 177px;
    width: 497px;
    height: 313px;
  }
  .cp-title {
    background: linear-gradient(90deg, #cfdde9, #d8e4ef 25%, #b8d0e8 55%, #a8c6e6 58%, #3c4044 60%, #50555a 68%, #8c9296 90%, #a4aaae);
  }
  .cp-title .winbtns {
    margin-right: 7px;
  }
  .cp-title .wb.close {
    width: 36px;
    height: 16px;
  }
  .cp-body {
    flex: 1;
    display: flex;
    background: #ececec;
    border: 1px solid #7e8a94;
    padding: 26px 0 0 9px;
    box-sizing: border-box;
    min-height: 0;
  }
  .cp-left {
    width: 234px;
    flex: none;
  }
  .field {
    position: relative;
    width: 224px;
    height: 225px;
    box-sizing: border-box;
    border: 1px solid #aaa;
    background:
      linear-gradient(to top, #000, rgba(0, 0, 0, 0)),
      linear-gradient(to right, #fff, #ffcc00);
  }
  .marker {
    position: absolute;
    left: 153px;
    top: 13px;
    width: 9px;
    height: 9px;
    border: 1px solid #222;
    border-radius: 50%;
  }
  .webonly {
    display: flex;
    align-items: center;
    margin: 7px 0 0 -2px;
    gap: 3px;
    color: #222;
    font-size: 11px;
    white-space: nowrap;
  }
  .cb {
    width: 11px;
    height: 11px;
    border: 1px solid #aaa;
    background: linear-gradient(135deg, #ddd, #fafafa);
  }
  .hue {
    position: relative;
    width: 18px;
    height: 224px;
    flex: none;
    box-sizing: border-box;
    border: 1px solid #bbb;
    background: linear-gradient(#f00, #f0f 17%, #00f 33%, #0ff 50%, #0f0 67%, #ff0 83%, #f00);
  }
  .tri {
    position: absolute;
    top: 188px;
    border: 5px solid transparent;
  }
  .tri.l {
    left: -11px;
    border-left: 6px solid #fff;
    border-right: 0;
    filter: drop-shadow(0 0 1px #555);
  }
  .tri.r {
    right: -11px;
    border-right: 6px solid #fff;
    border-left: 0;
    filter: drop-shadow(0 0 1px #555);
  }
  .cp-right {
    margin: -17px 0 0 10px;
    width: 210px;
    flex: none;
  }
  .cp-top {
    display: flex;
    height: 114px;
    padding-left: 2px;
  }
  .preview {
    width: 106px;
    flex: none;
    padding-top: 5px;
  }
  .preview > span {
    display: block;
    width: 52px;
    text-align: center;
    font-size: 11px;
  }
  .prev-row {
    display: flex;
    align-items: flex-end;
    gap: 8px;
    margin: 1px 0 2px;
  }
  .prev-main {
    width: 52px;
    height: 60px;
    box-sizing: border-box;
    background: #eac842;
    border: 1px solid #4a4530;
  }
  .prev-side {
    display: flex;
    flex-direction: column;
    gap: 3px;
  }
  .prev-side svg {
    width: 11px;
    height: 11px;
  }
  .web-sw {
    width: 12px;
    height: 12px;
    box-sizing: border-box;
    background: #ffc72c;
    border: 1px solid #999;
  }
  .cp-btns {
    width: 96px;
    flex: none;
  }
  .cp-btns .btn + .btn {
    margin-top: 15px;
  }
  .cp-btns .btn.b2 {
    margin-top: 10px;
  }
  .btn.def {
    border-color: #3aa6d8;
    box-shadow: 0 0 1px #3aa6d8;
  }
  .vals {
    display: flex;
  }
  .vcol {
    width: 118px;
    flex: none;
  }
  .vcol + .vcol {
    width: 92px;
  }
  .vgroup {
    display: flex;
    flex-direction: column;
    gap: 5.500px;
  }
  .vgroup.gap {
    margin-top: 8px;
    gap: 5px;
  }
  .vrow {
    display: grid;
    grid-template-columns: 13px 22px 38px 1fr;
    align-items: center;
    height: 16px;
  }
  .vrow.wide {
    grid-template-columns: 13px 22px 48px;
  }
  .radio {
    width: 12px;
    height: 12px;
    box-sizing: border-box;
    border: 1px solid #a0a0a0;
    border-radius: 50%;
    background: radial-gradient(#fafafa, #cfcfcf);
  }
  .radio.on {
    background: radial-gradient(#1d7fb0 35%, #c8d8e0 45%, #e4e4e4);
    border-color: #778;
  }
  .vkey {
    padding-left: 2px;
    color: #333;
    font-size: 11.500px;
  }
  .vkey.right {
    text-align: right;
    padding: 0 4px 0 0;
  }
  .vinput {
    height: 16px;
    box-sizing: border-box;
    background: #fff;
    border: 1px solid #dedede;
    border-radius: 2px;
    padding: 0 3px;
    line-height: 14px;
    font-size: 11.500px;
    color: #222;
  }
  .sel {
    background: #3a8ee8;
    color: #fff;
  }
  .vunit {
    padding-left: 3px;
    font-size: 11.500px;
    color: #333;
  }
  .hexrow {
    display: grid;
    grid-template-columns: 16px 94px;
    margin-top: 8px;
    align-items: center;
    padding-left: 0;
    text-align: center;
    color: #333;
  }
  .hex {
    display: block;
    text-align: left;
  }

  .redbox {
    position: absolute;
    left: 286px;
    top: 152px;
    width: 507px;
    height: 342px;
    box-sizing: border-box;
    border: 3px solid #ec3a43;
    pointer-events: none;
  }

  /* watermark */
  .watermark {
    position: absolute;
    left: 767px;
    top: 520px;
    width: 185px;
    height: 90px;
    color: rgba(255, 255, 255, 0.68);
    font-family: "Liberation Sans", sans-serif;
  }
  .wm-bai {
    position: absolute;
    left: 0;
    top: 21px;
    font-size: 38px;
    font-weight: bold;
    line-height: 40px;
    letter-spacing: 1px;
    text-shadow: 0 0 1px rgba(0, 0, 0, 0.3);
  }
  .paw {
    position: absolute;
    left: 57px;
    top: 5px;
    width: 62px;
    height: 62px;
    fill: rgba(255, 255, 255, 0.72);
  }
  .paw text {
    fill: #444;
    font: bold 18px "Liberation Sans", sans-serif;
  }
  .wm-jy {
    position: absolute;
    left: 116px;
    top: 24px;
    font-family: "Noto Sans CJK SC", sans-serif;
    font-size: 30px;
    line-height: 34px;
    font-weight: bold;
  }
  .wm-url {
    position: absolute;
    left: 0;
    top: 60px;
    font-size: 21px;
    line-height: 26px;
    letter-spacing: 0.500px;
    white-space: nowrap;
    text-shadow: 0 0 1px rgba(0, 0, 0, 0.2);
  }
</style>
